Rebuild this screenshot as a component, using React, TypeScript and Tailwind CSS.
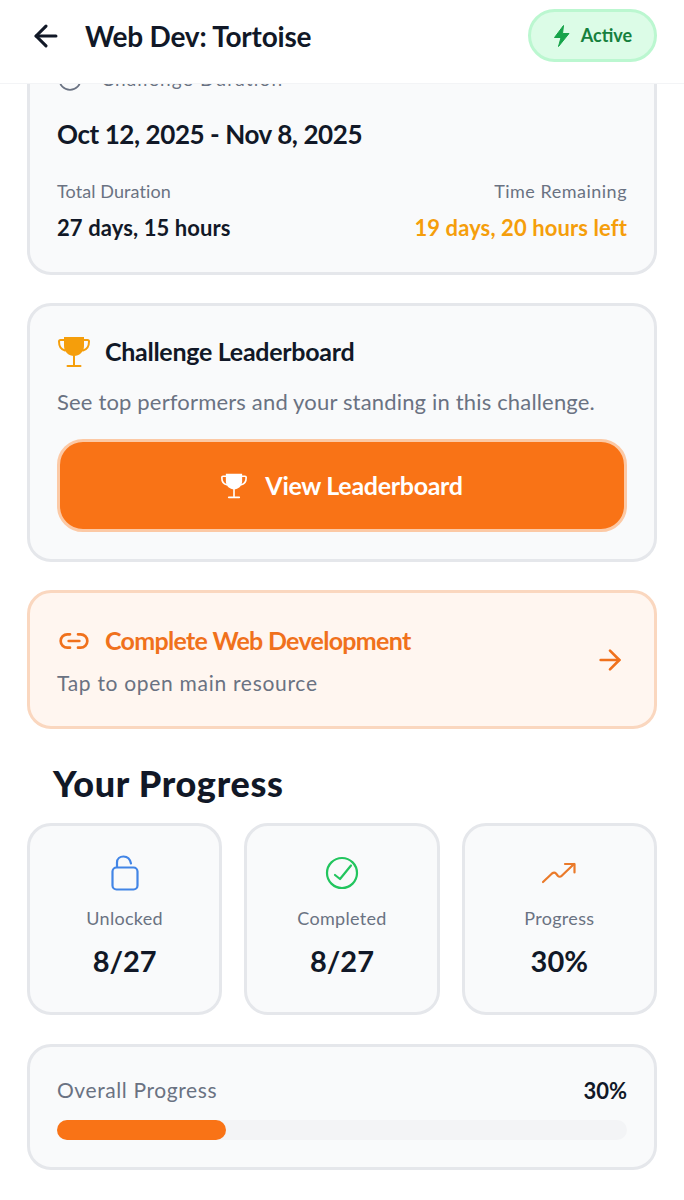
import { ArrowLeft, ArrowRight, Clock, Link2 } from 'lucide-react';

function TrophyIcon({ className }: { className: string }) {
  return (
    <svg viewBox="0 0 32 32" fill="none" stroke="currentColor" strokeWidth="2" strokeLinecap="round" className={className}>
      <path d="M6 1H26V10C26 16 21 20 16 20C11 20 6 16 6 10Z" fill="currentColor" stroke="none" />
      <path d="M6 4H2.5C1.5 4 1 4.5 1 5.5C1 10 3 13.5 7 14.5" />
      <path d="M26 4H29.5C30.5 4 31 4.5 31 5.5C31 10 29 13.5 25 14.5" />
      <path d="M16 20V29" />
      <path d="M9.5 30H22.5" />
    </svg>
  );
}

function BoltIcon() {
  return (
    <svg viewBox="0 0 18 24" className="h-[24px] w-[18px] fill-[#16a34a] stroke-[#16a34a]" strokeWidth="1" strokeLinejoin="round">
      <path d="M10.5 1.5L1.5 13.5H8L5.5 22.5L16 9.5H9.5Z" />
    </svg>
  );
}

function UnlockIcon() {
  return (
    <svg viewBox="0 0 28 36" fill="none" stroke="#4285e6" strokeWidth="2.2" strokeLinecap="round" className="h-[36px] w-[28px]">
      <rect x="1.5" y="12.5" width="25" height="22" rx="4" />
      <path d="M6 12V7.5C6 3.5 9 1.5 12.5 1.5C16 1.5 19 3.5 20 8.5" />
    </svg>
  );
}

function CheckIcon() {
  return (
    <svg viewBox="0 0 34 34" fill="none" stroke="#22c55e" strokeWidth="2.2" strokeLinecap="round" strokeLinejoin="round" className="h-[34px] w-[34px]">
      <circle cx="17" cy="17" r="15" />
      <path d="M10 19L15 23L26 9.5" />
    </svg>
  );
}

function TrendIcon() {
  return (
    <svg viewBox="0 0 36 24" fill="none" stroke="#ea7a2a" strokeWidth="2.2" strokeLinecap="round" strokeLinejoin="round" className="h-[24px] w-[36px]">
      <path d="M2 21L11 12.5C13 11 14 11.5 15 12.5L17 15C18 16 19.5 16 20.5 15L33 3" />
      <path d="M24 3H33.5V11.5" />
    </svg>
  );
}

const stats = [
  { label: 'Unlocked', value: '8/27', icon: <UnlockIcon /> },
  { label: 'Completed', value: '8/27', icon: <CheckIcon /> },
  { label: 'Progress', value: '30%', icon: <TrendIcon /> },
];

export default function App() {
  return (
    <div className="flex h-[1200px] w-[684px] flex-col overflow-hidden bg-white font-['Lato',sans-serif] text-[#111827]">
      {/* Header */}
      <header className="z-10 flex h-[84px] shrink-0 items-center justify-between border-b border-gray-100 bg-white pl-[29px] pr-[27px] pb-[12px]">
        <div className="flex items-center gap-[22px]">
          <ArrowLeft size={34} strokeWidth={2.2} />
          <h1 className="text-[28px] font-bold tracking-[-0.2px]">Web Dev: Tortoise</h1>
        </div>
        <div className="flex h-[53px] w-[129px] items-center justify-center gap-[10px] rounded-full border-[3px] border-[#bbf7d0] bg-[#dcfce7] text-[#15803d]">
          <BoltIcon />
          <span className="text-[18px] font-bold">Active</span>
        </div>
      </header>

      <main className="flex flex-col px-[27px]">
        {/* Duration */}
        <section className="-mt-[45px] rounded-[24px] border-[3px] border-gray-200 bg-gray-50 px-[27px] pb-[30px] pt-[24px]">
          <div className="flex h-[26px] items-center gap-[18px] text-gray-500">
            <Clock size={26} strokeWidth={1.5} />
            <span className="text-[19px] tracking-[1.2px]">Challenge Duration</span>
          </div>
          <div className="mt-[25px] text-[26px] font-bold leading-[34px] tracking-[-0.42px]">Oct 12, 2025 - Nov 8, 2025</div>
          <div className="mt-[28px] flex justify-between">
            <div>
              <div className="text-[18px] leading-[24px] tracking-[0.1px] text-gray-500">Total Duration</div>
              <div className="mt-[11px] text-[22px] font-bold leading-[28px] tracking-[0.1px]">27 days, 15 hours</div>
            </div>
            <div className="text-right">
              <div className="text-[18px] leading-[24px] tracking-[0.5px] text-gray-500">Time Remaining</div>
              <div className="mt-[11px] text-[22px] font-bold leading-[28px] tracking-[0.1px] text-[#f59e0b]">19 days, 20 hours left</div>
            </div>
          </div>
        </section>

        {/* Leaderboard */}
        <section className="mt-[28px] rounded-[24px] border-[3px] border-gray-200 bg-gray-50 px-[27px] pb-[27px] pt-[28px]">
          <div className="flex h-[36px] items-center gap-[15px]">
            <TrophyIcon className="ml-[1px] h-[32px] w-[32px] text-[#f59e0b]" />
            <h2 className="text-[25px] font-bold tracking-[-0.28px]">Challenge Leaderboard</h2>
          </div>
          <p className="mt-[18px] text-[22px] leading-[28px] tracking-[0.17px] text-gray-500">See top performers and your standing in this challenge.</p>
          <button className="mt-[23px] flex h-[93px] w-full items-center justify-center gap-[18px] rounded-[26px] border-[3px] border-[#fcc9a5] bg-[#f97316] text-white">
            <TrophyIcon className="h-[28px] w-[26px]" />
            <span className="text-[25px] font-bold tracking-[-0.3px]">View Leaderboard</span>
          </button>
        </section>

        {/* Resource link */}
        <section className="mt-[28px] flex h-[139px] items-center justify-between rounded-[24px] border-[3px] border-[#fad7bf] bg-[#fff6f0] pl-[27px] pr-[28px]">
          <div>
            <div className="flex h-[36px] items-center gap-[15px] text-[#f0711c]">
              <Link2 size={32} strokeWidth={2} className="ml-[1px]" />
              <h2 className="text-[25px] font-bold tracking-[-0.7px]">Complete Web Development</h2>
            </div>
            <p className="mt-[10px] text-[21px] leading-[28px] tracking-[0.7px] text-gray-500">Tap to open main resource</p>
          </div>
          <ArrowRight size={32} strokeWidth={2} className="text-[#f0711c]" />
        </section>

        <h2 className="mt-[31px] pl-[26px] text-[36px] font-black leading-[46px] tracking-[0.7px]">Your Progress</h2>

        {/* Stats */}
        <div className="mt-[17px] grid grid-cols-3 gap-[22px]">
          {stats.map((s) => (
            <div key={s.label} className="flex h-[192px] flex-col items-center rounded-[24px] border-[3px] border-gray-200 bg-gray-50 pt-[29px]">
              <div className="flex h-[36px] items-center justify-center">{s.icon}</div>
              <div className="mt-[15px] text-[18px] leading-[24px] tracking-[0.3px] text-gray-500">{s.label}</div>
              <div className="mt-[12px] text-[29px] font-bold leading-[38px]">{s.value}</div>
            </div>
          ))}
        </div>

        {/* Overall */}
        <section className="mt-[29px] h-[126px] rounded-[24px] border-[3px] border-gray-200 bg-gray-50 px-[27px] pt-[28px]">
          <div className="flex h-[30px] items-center justify-between">
            <span className="text-[21px] tracking-[0.6px] text-gray-500">Overall Progress</span>
            <span className="text-[22px] font-bold">30%</span>
          </div>
          <div className="mt-[15px] h-[20px] rounded-full bg-gray-100">
            <div className="h-full w-[169px] rounded-full bg-[#f97316]" />
          </div>
        </section>
      </main>
    </div>
  );
}
